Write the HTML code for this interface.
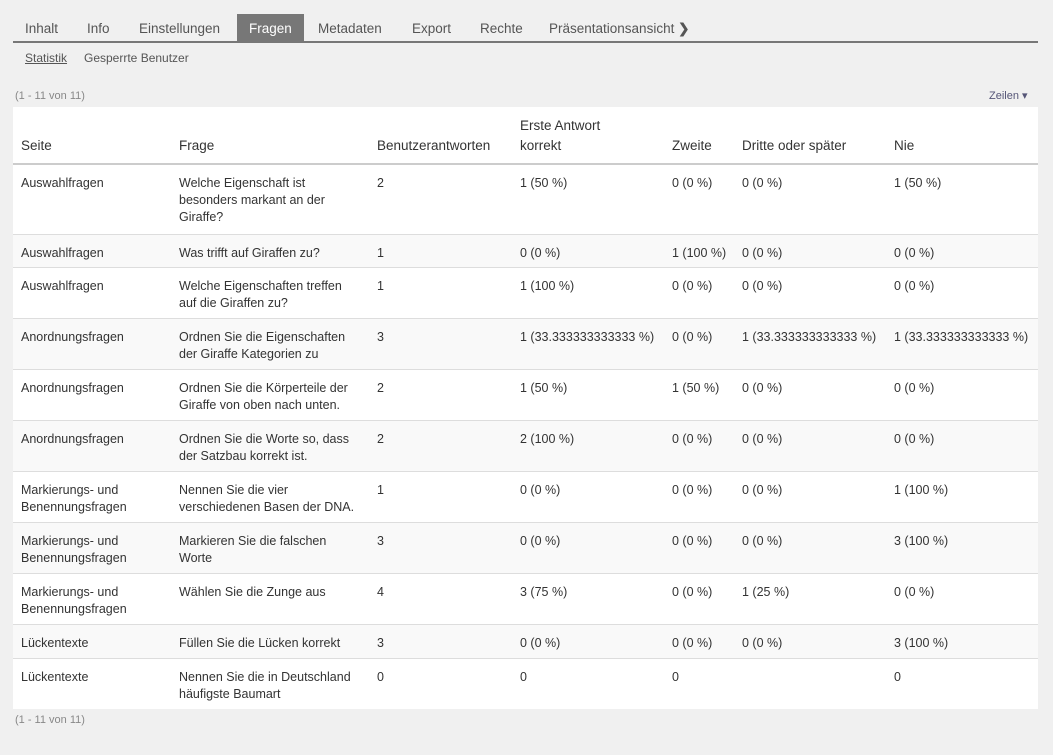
<!DOCTYPE html><html><head><meta charset="utf-8"><style>
body{margin:0;background:#f0f0f0;font-family:"Liberation Sans",sans-serif;color:#333;width:1053px;height:755px;overflow:hidden;position:relative}
.tabs{position:absolute;left:13px;top:14px;width:1025px;height:27px;border-bottom:2px solid #777}
.tabs span{position:absolute;top:0;height:27px;line-height:29px;font-size:13.5px;color:#555}
.tabs .on{background:#777;color:#fff;padding:0 12px}
.sub{position:absolute;top:51px;font-size:12px;color:#555}
.small{position:absolute;font-size:11px;color:#888}
table{position:absolute;left:13px;top:107px;width:1025px;border-collapse:collapse;table-layout:fixed;background:#fff;font-size:12.5px}
td,th{vertical-align:top;text-align:left;padding:10px 0 0 8px;line-height:17px;font-weight:normal}
td:nth-child(2){white-space:nowrap}
th{vertical-align:bottom;font-size:13.5px;padding-bottom:7px;height:49px;padding-top:0;border-bottom:2px solid #ccc;line-height:20px}
tr.g td{background:#f9f9f9}
tr td{border-bottom:1px solid #ddd}
</style></head><body>
<div class="tabs">
<span style="left:12px">Inhalt</span><span style="left:74px">Info</span><span style="left:126px">Einstellungen</span>
<span class="on" style="left:224px">Fragen</span><span style="left:305px">Metadaten</span><span style="left:399px">Export</span><span style="left:467px">Rechte</span><span style="left:536px">Präsentationsansicht <b style="color:#555">❯</b></span>
</div>
<div class="sub" style="left:25px;text-decoration:underline">Statistik</div><div class="sub" style="left:84px">Gesperrte Benutzer</div>
<div class="small" style="left:15px;top:90px">(1 - 11 von 11)</div>
<div class="small" style="left:989px;top:89px;color:#557">Zeilen ▾</div>
<table>
<colgroup><col style="width:158px"><col style="width:198px"><col style="width:143px"><col style="width:152px"><col style="width:70px"><col style="width:152px"><col></colgroup>
<tr><th>Seite</th><th>Frage</th><th>Benutzerantworten</th><th>Erste Antwort<br>korrekt</th><th>Zweite</th><th>Dritte oder später</th><th>Nie</th></tr>
<tr style="height:70px"><td>Auswahlfragen</td><td>Welche Eigenschaft ist<br>besonders markant an der<br>Giraffe?</td><td>2</td><td>1 (50 %)</td><td>0 (0 %)</td><td>0 (0 %)</td><td>1 (50 %)</td></tr>
<tr class="g" style="height:33px"><td>Auswahlfragen</td><td>Was trifft auf Giraffen zu?</td><td>1</td><td>0 (0 %)</td><td>1 (100 %)</td><td>0 (0 %)</td><td>0 (0 %)</td></tr>
<tr style="height:51px"><td>Auswahlfragen</td><td>Welche Eigenschaften treffen<br>auf die Giraffen zu?</td><td>1</td><td>1 (100 %)</td><td>0 (0 %)</td><td>0 (0 %)</td><td>0 (0 %)</td></tr>
<tr class="g" style="height:51px"><td>Anordnungsfragen</td><td>Ordnen Sie die Eigenschaften<br>der Giraffe Kategorien zu</td><td>3</td><td>1 (33.333333333333 %)</td><td>0 (0 %)</td><td>1 (33.333333333333 %)</td><td>1 (33.333333333333 %)</td></tr>
<tr style="height:51px"><td>Anordnungsfragen</td><td>Ordnen Sie die Körperteile der<br>Giraffe von oben nach unten.</td><td>2</td><td>1 (50 %)</td><td>1 (50 %)</td><td>0 (0 %)</td><td>0 (0 %)</td></tr>
<tr class="g" style="height:51px"><td>Anordnungsfragen</td><td>Ordnen Sie die Worte so, dass<br>der Satzbau korrekt ist.</td><td>2</td><td>2 (100 %)</td><td>0 (0 %)</td><td>0 (0 %)</td><td>0 (0 %)</td></tr>
<tr style="height:51px"><td>Markierungs- und Benennungsfragen</td><td>Nennen Sie die vier<br>verschiedenen Basen der DNA.</td><td>1</td><td>0 (0 %)</td><td>0 (0 %)</td><td>0 (0 %)</td><td>1 (100 %)</td></tr>
<tr class="g" style="height:51px"><td>Markierungs- und Benennungsfragen</td><td>Markieren Sie die falschen<br>Worte</td><td>3</td><td>0 (0 %)</td><td>0 (0 %)</td><td>0 (0 %)</td><td>3 (100 %)</td></tr>
<tr style="height:51px"><td>Markierungs- und Benennungsfragen</td><td>Wählen Sie die Zunge aus</td><td>4</td><td>3 (75 %)</td><td>0 (0 %)</td><td>1 (25 %)</td><td>0 (0 %)</td></tr>
<tr class="g" style="height:34px"><td>Lückentexte</td><td>Füllen Sie die Lücken korrekt</td><td>3</td><td>0 (0 %)</td><td>0 (0 %)</td><td>0 (0 %)</td><td>3 (100 %)</td></tr>
<tr style="height:51px"><td style="border:0">Lückentexte</td><td style="border:0">Nennen Sie die in Deutschland<br>häufigste Baumart</td><td style="border:0">0</td><td style="border:0">0</td><td style="border:0">0</td><td style="border:0"></td><td style="border:0">0</td></tr>
</table>
<div class="small" style="left:15px;top:714px">(1 - 11 von 11)</div>
</body></html>
